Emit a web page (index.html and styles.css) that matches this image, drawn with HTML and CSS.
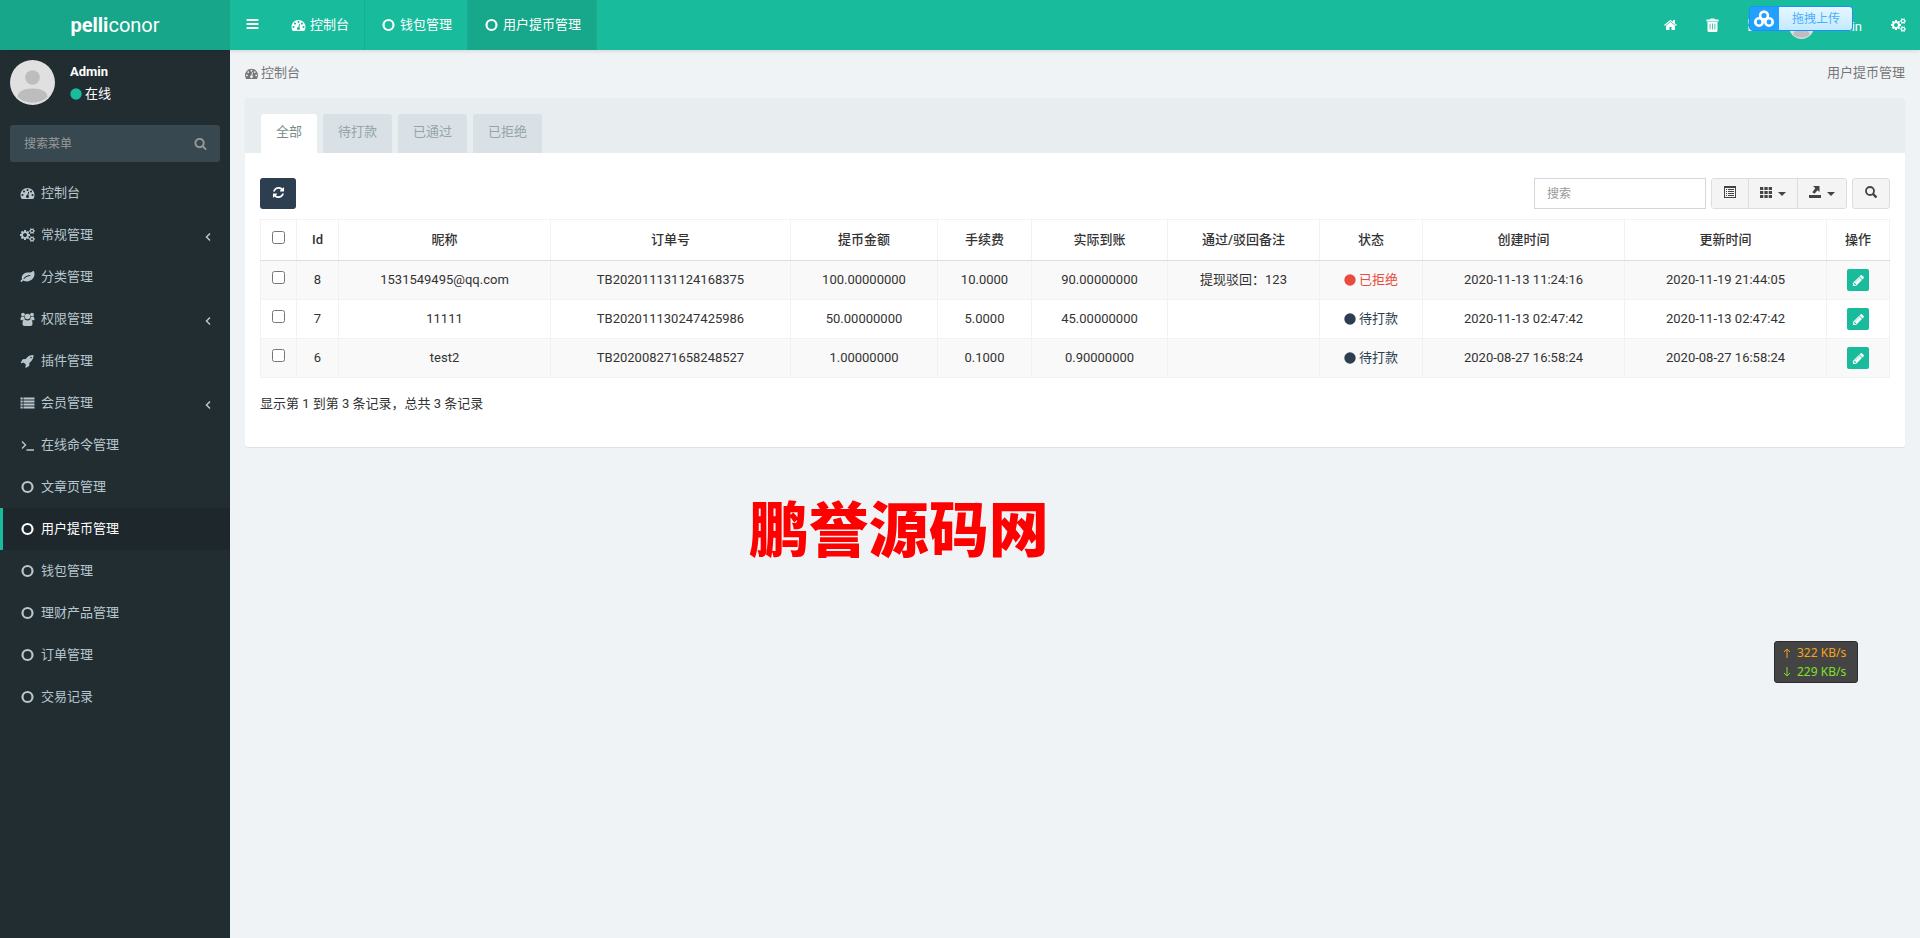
FILE: index.html
```html
<!DOCTYPE html>
<html lang="zh-CN">
<head>
<meta charset="utf-8">
<title>用户提币管理</title>
<link rel="stylesheet" href="styles.css">
</head>
<body>
<svg class="sprite" aria-hidden="true">
  <symbol id="bars" viewBox="0 0 1792 1792"><path d="M1664 1344v128q0 26-19 45t-45 19h-1408q-26 0-45-19t-19-45v-128q0-26 19-45t45-19h1408q26 0 45 19t19 45zm0-512v128q0 26-19 45t-45 19h-1408q-26 0-45-19t-19-45v-128q0-26 19-45t45-19h1408q26 0 45 19t19 45zm0-512v128q0 26-19 45t-45 19h-1408q-26 0-45-19t-19-45v-128q0-26 19-45t45-19h1408q26 0 45 19t19 45z"/></symbol>
  <symbol id="gauge" viewBox="0 0 1792 1792"><path d="M384 1152q0-53-37.5-90.5t-90.5-37.5-90.5 37.5-37.5 90.5 37.5 90.5 90.5 37.5 90.5-37.5 37.5-90.5zm192-448q0-53-37.5-90.5t-90.5-37.5-90.5 37.5-37.5 90.5 37.5 90.5 90.5 37.5 90.5-37.5 37.5-90.5zm428 481l101-382q6-26-7.5-48.5t-38.5-29.5-48 6.5-30 39.5l-101 382q-60 5-107 43.5t-63 98.5q-20 77 20 146t117 89 146-20 89-117q16-60-6-117t-72-91zm660-33q0-53-37.5-90.5t-90.5-37.5-90.5 37.5-37.5 90.5 37.5 90.5 90.5 37.5 90.5-37.5 37.5-90.5zm-640-640q0-53-37.5-90.5t-90.5-37.5-90.5 37.5-37.5 90.5 37.5 90.5 90.5 37.5 90.5-37.5 37.5-90.5zm448 192q0-53-37.5-90.5t-90.5-37.5-90.5 37.5-37.5 90.5 37.5 90.5 90.5 37.5 90.5-37.5 37.5-90.5zm320 448q0 261-141 483-19 29-54 29h-1402q-35 0-54-29-141-221-141-483 0-182 71-348t191-286 286-191 348-71 348 71 286 191 191 286 71 348z"/></symbol>
  <symbol id="search" viewBox="0 0 1792 1792"><path d="M1216 832q0-185-131.500-316.500t-316.500-131.500-316.500 131.500-131.500 316.500 131.500 316.500 316.500 131.500 316.500-131.500 131.500-316.500zm512 832q0 52-38 90t-90 38q-54 0-90-38l-343-342q-179 124-399 124-143 0-273.500-55.500t-225-150-150-225-55.500-273.500 55.500-273.500 150-225 225-150 273.500-55.500 273.500 55.500 225 150 150 225 55.500 273.500q0 220-124 399l343 343q37 37 37 90z"/></symbol>
  <symbol id="home" viewBox="0 0 1792 1792"><path d="M1472 992v480q0 26-19 45t-45 19h-384v-384h-256v384h-384q-26 0-45-19t-19-45v-480q0-1 .5-3t.5-3l575-474 575 474q1 2 1 6zm223-69l-62 74q-8 9-21 11h-3q-13 0-21-7l-692-577-692 577q-12 8-24 7-13-2-21-11l-62-74q-8-10-7-23.500t11-21.500l719-599q32-26 76-26t76 26l244 204v-195q0-14 9-23t23-9h192q14 0 23 9t9 23v408l219 182q10 8 11 21.500t-7 23.500z"/></symbol>
  <symbol id="trash" viewBox="0 0 14 14"><path d="M4.500 1.500 5 .5h4l.5 1H13v2H1v-2zM2 4h10v8.500q0 1.500-1.500 1.500h-7Q2 14 2 12.500z"/><path d="M4.600 5.500v6M7 5.500v6M9.400 5.500v6" stroke="#18bc9c" stroke-width=".8" fill="none"/></symbol>
  <symbol id="expand" viewBox="0 0 14 14"><path d="M1 1h5L4.500 2.500 7 5 5 7 2.500 4.500 1 6zM13 1v5l-1.500-1.500L9 7 7 5l2.500-2.500L8 1zM1 13V8l1.500 1.500L5 7l2 2-2.500 2.500L6 13zM13 13H8l1.500-1.500L7 9l2-2 2.500 2.500L13 8z"/></symbol>
  <symbol id="cogs" viewBox="0 0 1920 1792"><path d="M896 896q0-106-75-181t-181-75-181 75-75 181 75 181 181 75 181-75 75-181zm768 512q0-52-38-90t-90-38-90 38-38 90q0 53 37.500 90.500t90.500 37.500 90.500-37.500 37.500-90.500zm0-1024q0-52-38-90t-90-38-90 38-38 90q0 53 37.500 90.500t90.500 37.500 90.500-37.500 37.500-90.500zm-384 421v185q0 10-7 19.500t-16 10.500l-155 24q-11 35-32 76 34 48 90 115 7 11 7 20 0 12-7 19-23 30-82.500 89.500t-78.500 59.500q-11 0-21-7l-115-90q-37 19-77 31-11 108-23 155-7 24-30 24h-186q-11 0-20-7.500t-10-17.500l-23-153q-34-10-75-31l-118 89q-7 7-20 7-11 0-21-8-144-133-144-160 0-9 7-19 10-14 41-53t47-61q-23-44-35-82l-152-24q-10-1-17-9.500t-7-19.500v-185q0-10 7-19.500t16-10.500l155-24q11-35 32-76-34-48-90-115-7-11-7-20 0-12 7-20 22-30 82-89t79-59q11 0 21 7l115 90q34-18 77-32 11-108 23-154 7-24 30-24h186q11 0 20 7.500t10 17.500l23 153q34 10 75 31l118-89q8-7 20-7 11 0 21 8 144 133 144 160 0 8-7 19-12 16-42 54t-45 60q23 48 34 82l152 23q10 2 17 10.500t7 19.500zm640 533v140q0 16-149 31-12 27-30 52 51 113 51 138 0 4-4 7-122 71-124 71-8 0-46-47t-52-68q-20 2-30 2t-30-2q-14 21-52 68t-46 47q-2 0-124-71-4-3-4-7 0-25 51-138-18-25-30-52-149-15-149-31v-140q0-16 149-31 13-29 30-52-51-113-51-138 0-4 4-7 4-2 35-20t59-34 30-16q8 0 46 46.500t52 67.500q20-2 30-2t30 2q51-71 92-112l6-2q4 0 124 70 4 3 4 7 0 25-51 138 17 23 30 52 149 15 149 31zm0-1024v140q0 16-149 31-12 27-30 52 51 113 51 138 0 4-4 7-122 71-124 71-8 0-46-47t-52-68q-20 2-30 2t-30-2q-14 21-52 68t-46 47q-2 0-124-71-4-3-4-7 0-25 51-138-18-25-30-52-149-15-149-31v-140q0-16 149-31 13-29 30-52-51-113-51-138 0-4 4-7 4-2 35-20t59-34 30-16q8 0 46 46.500t52 67.500q20-2 30-2t30 2q51-71 92-112l6-2q4 0 124 70 4 3 4 7 0 25-51 138 17 23 30 52 149 15 149 31z"/></symbol>
  <symbol id="refresh" viewBox="0 0 1792 1792"><path d="M1639 1056q0 5-1 7-64 268-268 434.500t-478 166.500q-146 0-282.500-55t-243.500-157l-129 129q-19 19-45 19t-45-19-19-45v-448q0-26 19-45t45-19h448q26 0 45 19t19 45-19 45l-137 137q71 66 161 102t187 36q134 0 250-65t186-179q11-17 53-117 8-23 30-23h192q13 0 22.500 9.500t9.500 22.500zm25-800v448q0 26-19 45t-45 19h-448q-26 0-45-19t-19-45 19-45l138-138q-148-137-349-137-134 0-250 65t-186 179q-11 17-53 117-8 23-30 23h-199q-13 0-22.500-9.500t-9.500-22.500v-7q65-268 270-434.500t480-166.500q146 0 284 55.500t245 156.500l130-129q19-19 45-19t45 19 19 45z"/></symbol>
  <symbol id="pencil" viewBox="0 0 1792 1792"><path d="M491 1536l91-91-235-235-91 91v107h128v128h107zm523-928q0-22-22-22-10 0-17 7l-542 542q-7 7-7 17 0 22 22 22 10 0 17-7l542-542q7-7 7-17zm-54-192l416 416-832 832h-416v-416zm683 96q0 53-37 90l-166 166-416-416 166-165q36-38 90-38 53 0 91 38l235 234q37 39 37 91z"/></symbol>
  <symbol id="rocket" viewBox="0 0 1792 1792"><path d="M1440 448q0-40-28-68t-68-28-68 28-28 68 28 68 68 28 68-28 28-68zm224-288q0 249-75.500 430.500t-253.500 360.500q-81 80-195 176l-20 379q-2 16-16 26l-384 224q-7 4-16 4-12 0-23-9l-64-64q-13-14-8-32l85-276-281-281-276 85q-3 1-9 1-14 0-23-9l-64-64q-17-19-5-39l224-384q10-14 26-16l379-20q96-114 176-195 188-187 358-258t431-71q14 0 24 9.500t10 22.500z"/></symbol>
  <symbol id="leaf" viewBox="0 0 1792 1792"><path d="M1280 704q0-26-19-45t-45-19q-172 0-318 49.500t-259.500 134-235.500 219.500q-19 21-19 45 0 26 19 45t45 19q24 0 45-19 27-24 74-71t67-66q137-124 268.500-176t313.500-52q26 0 45-19t19-45zm512-198q0 95-20 193-46 224-184.500 383t-357.500 268q-214 108-438 108-148 0-286-47-15-5-88-42t-96-37q-16 0-39.500 32t-45 70-52.500 70-60 32q-43 0-63.500-17.500t-45.500-59.500q-2-4-6-11t-5.500-10-3-9.500-1.500-13.500q0-35 31-73.500t68-65.500 68-56 31-48q0-4-14-38t-16-44q-9-51-9-104 0-115 43.500-220t119-184.500 170.500-139 204-95.500q55-18 145-25.500t179.500-9 178.500-6 163.500-24 113.500-56.500l29.500-29.500 29.500-28 27-20 36.500-16 43.500-4.500q39 0 70.500 46t47.500 112 24 124 8 96z"/></symbol>
  <symbol id="group" viewBox="0 0 14 14"><circle cx="2.500" cy="2.600" r="1.900"/><circle cx="11.500" cy="2.600" r="1.900"/><circle cx="7" cy="4.500" r="2.800"/><path d="M0 7.500Q0 4.600 1.500 4.600q1 .5 2.200.3Q3.700 6.300 4.600 7.200 3.200 7.300 2.500 8.200H1Q0 8.200 0 7.500zM14 7.500q0-2.900-1.500-2.900-1 .5-2.200.3 0 1.400-.9 2.300 1.400.1 2.100 1H13q1 0 1-.7zM4.300 7.500Q7 9.500 9.700 7.500q2.300 0 2.300 4.400Q12 14 10 14H4q-2 0-2-2.100 0-4.400 2.300-4.400z"/></symbol>
  <symbol id="list" viewBox="0 0 14 14"><path d="M0 1.500h2.200v2H0zM3 1.500h11v2H3zM0 4.500h2.200v2H0zM3 4.500h11v2H3zM0 7.500h2.200v2H0zM3 7.500h11v2H3zM0 10.500h2.200v2H0zM3 10.500h11v2H3z"/></symbol>
  <symbol id="terminal" viewBox="0 0 14 14"><path d="M1.500 3.500 5 7 1.500 10.500M6 12h7.500" fill="none" stroke="currentColor" stroke-width="1.400"/></symbol>
  <symbol id="ring" viewBox="0 0 14 14"><circle cx="7" cy="7" r="5" fill="none" stroke="currentColor" stroke-width="2.200"/></symbol>
  <symbol id="dot" viewBox="0 0 12 12"><circle cx="6" cy="6" r="5.700"/></symbol>
  <symbol id="angle" viewBox="0 0 14 14"><path d="M9 3.500 5.500 7 9 10.500" fill="none" stroke="currentColor" stroke-width="1.500"/></symbol>
  <symbol id="person" viewBox="0 0 45 45"><circle cx="22.500" cy="22.500" r="22.500" fill="#e0e0e0"/><circle cx="22.500" cy="17.500" r="7.300" fill="#bdbdbd"/><path d="M7.500 37q1-8.500 15-8.500t15 8.500a22.500 22.500 0 0 1-30 0z" fill="#bdbdbd"/></symbol>
  <symbol id="detail" viewBox="0 0 12 12"><path d="M0 0h12v12H0zM1 2v9h10V2zM2 3h1v1H2zM4 3h6v1H4zM2 5h1v1H2zM4 5h6v1H4zM2 7h1v1H2zM4 7h6v1H4zM2 9h1v1H2zM4 9h6v1H4z" fill-rule="evenodd"/></symbol>
  <symbol id="grid" viewBox="0 0 12 12"><path d="M0 1h3.300v3H0zM4.400 1h3.300v3H4.400zM8.700 1H12v3H8.700zM0 5h3.300v3H0zM4.400 5h3.300v3H4.400zM8.700 5H12v3H8.700zM0 9h3.300v3H0zM4.400 9h3.300v3H4.400zM8.700 9H12v3H8.700z"/></symbol>
  <symbol id="export" viewBox="0 0 12 12"><path d="M0 9h12v3H0zM4 0h6.500v6L8.500 4.300 5.500 7.700 3.300 6.200 6.300 2.200z"/></symbol>
  <symbol id="lens" viewBox="0 0 12 12"><circle cx="5" cy="5" r="4" fill="none" stroke="currentColor" stroke-width="1.800"/><path d="M8 8l3.500 3.500" stroke="currentColor" stroke-width="2.400"/></symbol>
  <symbol id="cloud" viewBox="0 0 20 18"><g fill="none" stroke="#fff" stroke-width="2.600"><circle cx="10" cy="5.500" r="3.900"/><circle cx="5" cy="12" r="3.700"/><circle cx="15" cy="12" r="3.700"/></g></symbol>
</svg>

<header class="topbar">
  <a class="logo" href="#"><span><b>pelli</b>conor</span></a>
  <nav class="topnav">
    <button class="toggle" aria-label="菜单"><svg class="fw"><use href="#bars"/></svg></button>
    <a class="toptab" href="#"><svg class="fw"><use href="#gauge"/></svg>控制台</a>
    <a class="toptab" href="#"><svg class="fw"><use href="#ring"/></svg>钱包管理</a>
    <a class="toptab current" href="#"><svg class="fw"><use href="#ring"/></svg>用户提币管理</a>
  </nav>
  <div class="tools">
    <a class="tool" href="#" aria-label="首页"><svg class="fw"><use href="#home"/></svg></a>
    <a class="tool" href="#" aria-label="清除"><svg class="fw"><use href="#trash"/></svg></a>
    <a class="tool" href="#" aria-label="全屏"><svg class="fw"><use href="#expand"/></svg></a>
    <a class="tool user" href="#"><svg class="face"><use href="#person"/></svg>Admin</a>
    <a class="tool" href="#" aria-label="设置"><svg class="fw"><use href="#cogs"/></svg></a>
  </div>
  <button class="upload"><span class="upload-mark"><svg><use href="#cloud"/></svg></span><span class="upload-text">拖拽上传</span></button>
</header>

<div class="layout">
  <aside class="sidebar">
    <div class="profile">
      <svg class="avatar"><use href="#person"/></svg>
      <div class="who"><strong>Admin</strong><span class="online"><svg class="dot"><use href="#dot"/></svg>在线</span></div>
    </div>
    <form class="menu-search">
      <input type="text" placeholder="搜索菜单" aria-label="搜索菜单">
      <button type="button" aria-label="搜索"><svg><use href="#search"/></svg></button>
    </form>
    <nav class="menu">
      <a href="#"><svg class="fw"><use href="#gauge"/></svg>控制台</a>
      <a href="#"><svg class="fw"><use href="#cogs"/></svg>常规管理<svg class="angle"><use href="#angle"/></svg></a>
      <a href="#"><svg class="fw"><use href="#leaf"/></svg>分类管理</a>
      <a href="#"><svg class="fw"><use href="#group"/></svg>权限管理<svg class="angle"><use href="#angle"/></svg></a>
      <a href="#"><svg class="fw"><use href="#rocket"/></svg>插件管理</a>
      <a href="#"><svg class="fw"><use href="#list"/></svg>会员管理<svg class="angle"><use href="#angle"/></svg></a>
      <a href="#"><svg class="fw"><use href="#terminal"/></svg>在线命令管理</a>
      <a href="#"><svg class="fw"><use href="#ring"/></svg>文章页管理</a>
      <a class="active" href="#"><svg class="fw"><use href="#ring"/></svg>用户提币管理</a>
      <a href="#"><svg class="fw"><use href="#ring"/></svg>钱包管理</a>
      <a href="#"><svg class="fw"><use href="#ring"/></svg>理财产品管理</a>
      <a href="#"><svg class="fw"><use href="#ring"/></svg>订单管理</a>
      <a href="#"><svg class="fw"><use href="#ring"/></svg>交易记录</a>
    </nav>
  </aside>

  <main class="content">
    <div class="crumbs"><a href="#"><svg class="crumb-icon"><use href="#gauge"/></svg>控制台</a><span>用户提币管理</span></div>
    <section class="panel">
      <div class="panel-tabs">
        <a class="on" href="#">全部</a><a href="#">待打款</a><a href="#">已通过</a><a href="#">已拒绝</a>
      </div>
      <div class="panel-body">
        <div class="toolbar">
          <button class="refresh" aria-label="刷新"><svg><use href="#refresh"/></svg></button>
          <input class="find" type="text" placeholder="搜索" aria-label="搜索">
          <div class="group">
            <button class="plain" aria-label="切换"><svg><use href="#detail"/></svg></button>
            <button class="plain" aria-label="列"><svg><use href="#grid"/></svg><i class="caret"></i></button>
            <button class="plain" aria-label="导出"><svg><use href="#export"/></svg><i class="caret"></i></button>
          </div>
          <button class="plain single" aria-label="普通搜索"><svg><use href="#lens"/></svg></button>
        </div>
        <table class="records">
          <colgroup><col class="w-check"><col class="w-id"><col class="w-name"><col class="w-order"><col class="w-amount"><col class="w-fee"><col class="w-net"><col class="w-note"><col class="w-state"><col class="w-time"><col class="w-time"><col class="w-act"></colgroup>
          <thead><tr><th><input type="checkbox" aria-label="全选"></th><th>Id</th><th>昵称</th><th>订单号</th><th>提币金额</th><th>手续费</th><th>实际到账</th><th>通过/驳回备注</th><th>状态</th><th>创建时间</th><th>更新时间</th><th>操作</th></tr></thead>
          <tbody>
            <tr><td><input type="checkbox" aria-label="选择 8"></td><td>8</td><td>1531549495@qq.com</td><td>TB202011131124168375</td><td>100.00000000</td><td>10.0000</td><td>90.00000000</td><td>提现驳回：123</td><td><span class="state refused"><svg class="dot"><use href="#dot"/></svg>已拒绝</span></td><td>2020-11-13 11:24:16</td><td>2020-11-19 21:44:05</td><td><button class="edit" aria-label="编辑"><svg><use href="#pencil"/></svg></button></td></tr>
            <tr><td><input type="checkbox" aria-label="选择 7"></td><td>7</td><td>11111</td><td>TB202011130247425986</td><td>50.00000000</td><td>5.0000</td><td>45.00000000</td><td></td><td><span class="state"><svg class="dot"><use href="#dot"/></svg>待打款</span></td><td>2020-11-13 02:47:42</td><td>2020-11-13 02:47:42</td><td><button class="edit" aria-label="编辑"><svg><use href="#pencil"/></svg></button></td></tr>
            <tr><td><input type="checkbox" aria-label="选择 6"></td><td>6</td><td>test2</td><td>TB202008271658248527</td><td>1.00000000</td><td>0.1000</td><td>0.90000000</td><td></td><td><span class="state"><svg class="dot"><use href="#dot"/></svg>待打款</span></td><td>2020-08-27 16:58:24</td><td>2020-08-27 16:58:24</td><td><button class="edit" aria-label="编辑"><svg><use href="#pencil"/></svg></button></td></tr>
          </tbody>
        </table>
        <p class="summary">显示第 1 到第 3 条记录，总共 3 条记录</p>
      </div>
    </section>
  </main>
</div>

<div class="watermark">鹏誉源码网</div>
<div class="netspeed"><span class="up"><svg viewBox="0 0 8 10"><path d="M4 10V1M1 4l3-3 3 3"/></svg>322 KB/s</span><span class="down"><svg viewBox="0 0 8 10"><path d="M4 0v9M1 6l3 3 3-3"/></svg>229 KB/s</span></div>
</body>
</html>
```

FILE: styles.css
```css
* { box-sizing: border-box; }
body {
  margin: 0;
  min-height: 100vh;
  display: flex;
  flex-direction: column;
  background: #f0f3f6;
  color: #333;
  font: 13px/18px Roboto, "Noto Sans CJK SC", sans-serif;
}
a { color: inherit; text-decoration: none; }
button, input { font: inherit; color: inherit; margin: 0; }
button { border: 0; padding: 0; cursor: pointer; }
svg { fill: currentColor; flex: none; }
.sprite { position: absolute; width: 0; height: 0; }
.fw { width: 17px; height: 14px; }
.dot { width: 12px; height: 12px; }

.topbar {
  position: relative;
  z-index: 2;
  display: flex;
  height: 50px;
  background: #18bc9c;
  color: #fff;
  box-shadow: 0 1px 4px rgba(0, 0, 0, .12);
}
.logo {
  width: 230px;
  display: flex;
  align-items: center;
  justify-content: center;
  background: #17a689;
  font-size: 20px;
}
.logo b { font-weight: 700; }
.topnav { display: flex; }
.toggle { width: 45px; padding-bottom: 2px; background: none; display: flex; align-items: center; justify-content: center; }
.toptab {
  display: flex;
  align-items: center;
  gap: 3px;
  padding: 0 15px 1px;
  border-right: 1px solid #17ae91;
}
.toptab.current { background: #17a88b; }
.tools { display: flex; margin-left: auto; }
.tool { display: flex; align-items: center; padding: 0 13px 0 12px; gap: 10px; }
.user { padding: 3px 16px 0 13px; }
.face { width: 25px; height: 25px; }
.upload {
  position: absolute;
  top: 6px;
  right: 67px;
  display: flex;
  height: 25px;
  background: #22a0ff;
  border: 1px solid #1890ff;
  border-radius: 4px;
  overflow: hidden;
}
.upload-mark { width: 29px; height: 23px; display: flex; align-items: center; justify-content: center; }
.upload-mark svg { width: 20px; height: 18px; }
.upload-text { padding: 1px 12px 0 13px; font-size: 12px; line-height: 22px; background: linear-gradient(#e6f7ff, #c5e9ff); color: #48b0fa; }

.layout { flex: 1; display: flex; }
.sidebar { width: 230px; flex: none; background: #222d32; color: #b8c7ce; }
.profile { display: flex; gap: 15px; padding: 10px; color: #fff; }
.avatar { width: 45px; height: 45px; }
.who { display: flex; flex-direction: column; gap: 4px; padding-top: 3px; }
.online { display: flex; align-items: center; gap: 3px; }
.online .dot { color: #18bc9c; }
.menu-search { display: flex; margin: 10px; height: 37px; background: #374850; border-radius: 3px; color: #999; }
.menu-search input { flex: 1; min-width: 0; padding: 0 14px; border: 0; background: none; font-size: 12px; }
.menu-search button { width: 40px; padding-bottom: 1px; background: none; display: flex; align-items: center; justify-content: center; }
.menu-search svg { width: 13px; height: 13px; }
input::placeholder { color: #999; opacity: 1; }
.menu { display: flex; flex-direction: column; }
.menu a { display: flex; align-items: center; gap: 5px; height: 42px; padding: 0 15px 0 16px; border-left: 3px solid transparent; }
.menu .active { background: #1e272c; border-color: #18bc9c; color: #fff; }
.angle { width: 14px; height: 14px; margin: 4px 0 0 auto; }

.content { flex: 1; min-width: 0; padding: 14px 15px; }
.crumbs { display: flex; justify-content: space-between; height: 34px; color: #777; }
.crumbs a { display: flex; gap: 3px; }
.crumb-icon { width: 13px; height: 13px; margin-top: 3px; }
.panel { background: #fff; border-radius: 3px; box-shadow: 0 1px 1px rgba(0, 0, 0, .08); overflow: hidden; }
.panel-tabs { display: flex; gap: 6px; padding: 16px 16px 0; background: #e8edf0; }
.panel-tabs a { padding: 9px 15px 12px; background: #d9e0e6; color: #95a5a6; border-radius: 3px 3px 0 0; }
.panel-tabs .on { background: #fff; color: #7b8a8b; }
.panel-body { padding: 25px 15px 34px; }
.toolbar { display: flex; gap: 5px; height: 31px; margin-bottom: 10px; }
.toolbar button { display: flex; align-items: center; justify-content: center; gap: 6px; }
.toolbar svg { width: 12px; height: 12px; }
.toolbar .refresh { width: 36px; padding-bottom: 2px; background: #2c3e50; color: #fff; border-radius: 3px; }
.toolbar .refresh svg { width: 13px; height: 13px; }
.find { width: 172px; margin-left: auto; padding: 0 12px; border: 1px solid #d2d6de; background: #fff; font-size: 12px; }
.group { display: flex; border: 1px solid #ddd; border-radius: 3px; }
.plain { background: #f4f4f4; color: #444; padding: 0 11px 3px; border-left: 1px solid #ddd; }
.plain:first-child { border-left: 0; }
.group .plain:first-child { width: 36px; border-radius: 3px 0 0 3px; }
.group .plain:last-child { border-radius: 0 3px 3px 0; }
.toolbar .single { width: 38px; border: 1px solid #ddd; border-radius: 3px; }
.caret { border: 4px solid transparent; border-top-color: #444; border-bottom: 0; margin-top: 4px; }

.records { width: 100%; table-layout: fixed; border-collapse: collapse; text-align: center; }
.records th, .records td { border: 1px solid #f2f2f2; padding: 0; }
.records th { height: 41px; padding-bottom: 1px; font-weight: 500; border-bottom: 1px solid #ddd; }
.records td { height: 39px; }
.records tbody tr:nth-child(odd) { background: #f9f9f9; }
.records input { display: block; width: 13px; height: 13px; margin: 0 auto 5px; }
.w-check { width: 36px; }
.w-id { width: 42px; }
.w-name { width: 212px; }
.w-order { width: 240px; }
.w-amount { width: 147px; }
.w-fee { width: 94px; }
.w-net { width: 136px; }
.w-note { width: 152px; }
.w-state { width: 103px; }
.w-time { width: 202px; }
.w-act { width: 63px; }
.state { display: flex; align-items: center; justify-content: center; gap: 3px; color: #2c3e50; }
.refused { color: #e74c3c; }
.edit { display: flex; align-items: center; justify-content: center; width: 22px; height: 22px; margin: 0 auto; background: #18bc9c; color: #fff; border-radius: 2px; }
.edit svg { width: 13px; height: 13px; }
.summary { margin: 17px 0 0; }

.watermark {
  position: absolute;
  top: 487px;
  left: 39%;
  color: #f00;
  font-size: 60px;
  line-height: 90px;
  font-weight: 900;
  white-space: nowrap;
}
.netspeed {
  position: absolute;
  top: 641px;
  right: 62px;
  width: 84px;
  padding: 1px 8px;
  background: #444;
  border: 1px solid #2c2c2c;
  border-radius: 3px;
  font: 12px/19px "Noto Sans", sans-serif;
}
.netspeed span { display: flex; align-items: center; gap: 6px; white-space: nowrap; }
.netspeed svg { width: 8px; height: 10px; fill: none; stroke: currentColor; }
.up { color: #f9a01b; }
.down { color: #7ee02c; }
```
